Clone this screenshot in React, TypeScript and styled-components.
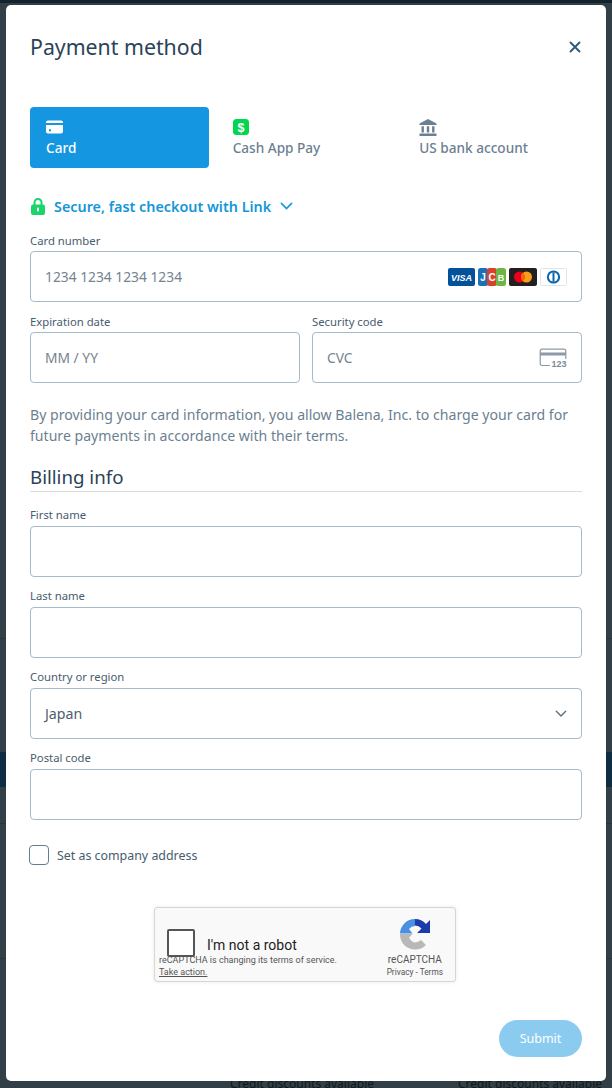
import styled, { createGlobalStyle } from 'styled-components';

const GlobalStyle = createGlobalStyle`
  html, body {
    margin: 0;
    padding: 0;
    background: #333f46;
  }
  * {
    box-sizing: border-box;
  }
`;

const font = `"Noto Sans", "Open Sans", sans-serif`;

const CardIcon = () => (
  <svg width="17" height="14" viewBox="0 0 17 14">
    <path d="M2 0.5h13a2 2 0 0 1 2 1.6V3H0v-.9A2 2 0 0 1 2 .5zM0 5h17v6.5a2 2 0 0 1-2 2H2a2 2 0 0 1-2-2z" fill="#fff" />
    <rect x="3" y="9.3" width="2" height="2" fill="#1496e0" />
  </svg>
);

const CashAppIcon = () => (
  <svg width="16" height="16" viewBox="0 0 16 16">
    <rect width="16" height="16" rx="3.5" fill="#00d64f" />
    <text x="8" y="12.6" textAnchor="middle" fontSize="12.5" fontWeight="700" fontFamily="Liberation Sans, sans-serif" fill="#fff">$</text>
  </svg>
);

const BankIcon = () => (
  <svg width="18" height="17" viewBox="0 0 18 17">
    <path d="M9 0l8.5 4.6V6H.5V4.6z" fill="#6c7f90" />
    <path d="M2.5 7.2h2.4v6.3H2.5zM7.8 7.2h2.4v6.3H7.8zM13.1 7.2h2.4v6.3h-2.4zM.5 14.6h17V17H.5z" fill="#6c7f90" />
  </svg>
);

const LockIcon = () => (
  <svg width="14" height="17" viewBox="0 0 14 17">
    <path d="M3.5 7V4.5a3.5 3.5 0 0 1 7 0V7" fill="none" stroke="#19d56b" strokeWidth="2" />
    <rect x="0" y="6.5" width="14" height="10.5" rx="2" fill="#19d56b" />
    <rect x="6" y="9.5" width="2" height="4" rx="1" fill="#fff" />
  </svg>
);

const Chevron = ({ color, size = 14, width = 2 }: { color: string; size?: number; width?: number }) => (
  <svg width={size} height={size * 0.64} viewBox="0 0 14 9">
    <path d="M1.5 1.5L7 7l5.5-5.5" fill="none" stroke={color} strokeWidth={width} strokeLinecap="round" />
  </svg>
);

const CloseIcon = () => (
  <svg width="12" height="12" viewBox="0 0 12 12">
    <path d="M1.5 1.5l9 9M10.5 1.5l-9 9" stroke="#2e5a7a" strokeWidth="1.9" strokeLinecap="round" />
  </svg>
);

const CardBrands = () => (
  <BrandRow>
    <svg width="27" height="18" viewBox="0 0 27 18">
      <rect width="27" height="18" rx="2" fill="#04519b" />
      <text x="13.5" y="12.5" textAnchor="middle" fontSize="9" fontWeight="700" fontStyle="italic" fontFamily="Liberation Sans, sans-serif" fill="#fff">VISA</text>
    </svg>
    <svg width="28" height="18" viewBox="0 0 28 18">
      <rect width="10" height="18" rx="2.5" fill="#1b70b8" />
      <rect x="9" width="10" height="18" rx="2.5" fill="#d8412a" />
      <rect x="18" width="10" height="18" rx="2.5" fill="#6cb644" />
      <text x="5" y="13" textAnchor="middle" fontSize="10" fontWeight="700" fontFamily="Liberation Sans, sans-serif" fill="#fff">J</text>
      <text x="14" y="13" textAnchor="middle" fontSize="10" fontWeight="700" fontFamily="Liberation Sans, sans-serif" fill="#fff">C</text>
      <text x="23" y="13" textAnchor="middle" fontSize="9" fontWeight="700" fontFamily="Liberation Sans, sans-serif" fill="#fff">B</text>
    </svg>
    <svg width="28" height="18" viewBox="0 0 28 18">
      <rect width="28" height="18" rx="2" fill="#231f20" />
      <circle cx="10.5" cy="9" r="5.5" fill="#eb001b" />
      <circle cx="17.5" cy="9" r="5.5" fill="#f79e1b" />
      <path d="M14 4.7a5.5 5.5 0 0 1 0 8.6a5.5 5.5 0 0 1 0-8.6z" fill="#ff5f00" />
    </svg>
    <svg width="27" height="18" viewBox="0 0 27 18">
      <rect x=".5" y=".5" width="26" height="17" rx="1" fill="#fff" stroke="#dfe5ea" />
      <circle cx="13.5" cy="9" r="6.6" fill="#0a65ac" />
      <circle cx="13.5" cy="9" r="4.6" fill="#fff" />
      <rect x="12.5" y="4.4" width="2" height="9.2" fill="#0a65ac" />
    </svg>
  </BrandRow>
);

const CvcIcon = () => (
  <svg width="28" height="20" viewBox="0 0 28 20">
    <path d="M11 17.5H3a1.8 1.8 0 0 1-1.8-1.8V3A1.8 1.8 0 0 1 3 1.2h22A1.8 1.8 0 0 1 26.8 3v8" fill="none" stroke="#8c9aa8" strokeWidth="1.2" />
    <rect x="1" y="4.5" width="26" height="3" fill="#8c9aa8" />
    <text x="27.5" y="18.5" textAnchor="end" fontSize="9" fontWeight="700" fontFamily="Liberation Sans, sans-serif" fill="#7b8a98">123</text>
  </svg>
);

const RecaptchaLogo = () => (
  <svg width="32" height="32" viewBox="0 0 32 32">
    <path d="M16 1a15 15 0 0 1 11 5l4-4v13H18l4.5-4.5A8.5 8.5 0 0 0 16 7.5z" fill="#1c3aa9" />
    <path d="M1 15.5a15 15 0 0 1 15-14.5v7a8 8 0 0 0-6 3l3.5 4.5z" fill="#4a90e2" />
    <path d="M1 16h12.5l-3.4 3.4A8.5 8.5 0 0 0 16 24.5a8.5 8.5 0 0 0 6-2.5l5 5a15 15 0 0 1-11 4.5A15 15 0 0 1 1 16z" fill="#b8b8b8" />
  </svg>
);

const Field = ({ label, placeholder, value, children }: { label: string; placeholder?: string; value?: string; children?: React.ReactNode }) => (
  <FieldWrap>
    <Label>{label}</Label>
    <InputBox>
      {placeholder && <Placeholder>{placeholder}</Placeholder>}
      {value && <Value>{value}</Value>}
      {children}
    </InputBox>
  </FieldWrap>
);

const App = () => (
  <Page>
    <GlobalStyle />
    <BehindText>
      <span>Credit discounts available</span>
      <span>Credit discounts available</span>
    </BehindText>
    <Modal>
      <Header>
        <Title>Payment method</Title>
        <CloseButton><CloseIcon /></CloseButton>
      </Header>

      <Tabs>
        <Tab $active>
          <TabIcon><CardIcon /></TabIcon>
          Card
        </Tab>
        <Tab>
          <TabIcon><CashAppIcon /></TabIcon>
          Cash App Pay
        </Tab>
        <Tab>
          <TabIcon><BankIcon /></TabIcon>
          US bank account
        </Tab>
      </Tabs>

      <LinkRow>
        <LockIcon />
        <LinkText>Secure, fast checkout with Link</LinkText>
        <Chevron color="#1496e0" size={13} width={1.8} />
      </LinkRow>

      <Fields>
        <Field label="Card number" placeholder="1234 1234 1234 1234">
          <CardBrands />
        </Field>
        <TwoCols>
          <Field label="Expiration date" placeholder="MM / YY" />
          <Field label="Security code" placeholder="CVC">
            <CvcIcon />
          </Field>
        </TwoCols>
      </Fields>

      <Notice>
        By providing your card information, you allow Balena, Inc. to charge your card for future payments in accordance with their terms.
      </Notice>

      <SectionTitle>Billing info</SectionTitle>

      <BillingFields>
        <Field label="First name" />
        <Field label="Last name" />
        <Field label="Country or region" value="Japan">
          <Chevron color="#5f7180" size={12} width={1.7} />
        </Field>
        <Field label="Postal code" />
      </BillingFields>

      <CheckRow>
        <CheckBox />
        <CheckLabel>Set as company address</CheckLabel>
      </CheckRow>

      <Captcha>
        <CaptchaBox />
        <CaptchaText>I'm not a robot</CaptchaText>
        <CaptchaBrand>
          <RecaptchaLogo />
          <BrandName>reCAPTCHA</BrandName>
          <BrandLinks>Privacy - Terms</BrandLinks>
        </CaptchaBrand>
        <CaptchaNotice>
          reCAPTCHA is changing its terms of service.
          <br />
          <u>Take action.</u>
        </CaptchaNotice>
      </Captcha>

      <Footer>
        <SubmitButton>Submit</SubmitButton>
      </Footer>
    </Modal>
  </Page>
);

const Page = styled.div`
  position: relative;
  width: 612px;
  height: 1088px;
  overflow: hidden;
  display: flex;
  flex-direction: column;
  justify-content: flex-end;
  background:
    linear-gradient(#14222e 0 3px, transparent 3px),
    linear-gradient(to bottom, transparent 752px, #0e2c42 752px, #0e2c42 787px, transparent 787px),
    linear-gradient(to bottom, transparent 638px, #2a343a 638px, #2a343a 639px, transparent 639px),
    linear-gradient(to bottom, transparent 823px, #2a343a 823px, #2a343a 824px, transparent 824px),
    linear-gradient(to bottom, transparent 958px, #2a343a 958px, #2a343a 959px, transparent 959px),
    #333f46;
`;

const BehindText = styled.div`
  display: flex;
  gap: 84px;
  padding-left: 230px;
  height: 12px;
  margin-bottom: -2px;
  font-family: ${font};
  font-size: 12px;
  line-height: 12px;
  color: #10181d;
  white-space: nowrap;
`;

const Modal = styled.div`
  position: absolute;
  top: 5px;
  left: 6px;
  width: 600px;
  height: 1076px;
  padding: 24px;
  background: #fff;
  border-radius: 5px;
  font-family: ${font};
  color: #2a4359;
`;

const Header = styled.div`
  display: flex;
  align-items: center;
  justify-content: space-between;
  height: 36px;
  margin-bottom: 42px;
`;

const Title = styled.h2`
  margin: 0;
  font-size: 21.3px;
  font-weight: 400;
  line-height: 36px;
  color: #2a4359;
`;

const CloseButton = styled.button`
  display: flex;
  padding: 0;
  margin-right: 1px;
  border: 0;
  background: none;
`;

const Tabs = styled.div`
  display: grid;
  grid-template-columns: repeat(3, 1fr);
  gap: 8px;
`;

const Tab = styled.div<{ $active?: boolean }>`
  height: 61px;
  padding: 12px 16px 0;
  border-radius: 4px;
  font-size: 13.6px;
  font-weight: 500;
  line-height: 20px;
  background: ${(p) => (p.$active ? '#1496e0' : 'transparent')};
  color: ${(p) => (p.$active ? '#fff' : '#6c7f90')};
`;

const TabIcon = styled.div`
  display: flex;
  align-items: center;
  height: 16px;
  margin-bottom: 3px;
`;

const LinkRow = styled.div`
  display: flex;
  align-items: center;
  gap: 9px;
  height: 20px;
  margin-top: 28px;
  margin-bottom: 18px;
  padding-left: 1px;
`;

const LinkText = styled.span`
  margin-right: 0;
  font-size: 14.35px;
  font-weight: 600;
  color: #1496d8;
`;

const Fields = styled.div`
  display: flex;
  flex-direction: column;
  gap: 13px;
`;

const TwoCols = styled.div`
  display: grid;
  grid-template-columns: repeat(2, 1fr);
  gap: 12px;
`;

const FieldWrap = styled.div`
  display: flex;
  flex-direction: column;
`;

const Label = styled.div`
  height: 17px;
  font-size: 11.3px;
  line-height: 14px;
  color: #475c6d;
`;

const BillingFields = styled(Fields)`
  gap: 12px;

  ${Label} {
    height: 18px;
  }
`;

const InputBox = styled.div`
  display: flex;
  align-items: center;
  justify-content: space-between;
  height: 51px;
  padding: 0 14px;
  border: 1px solid #a3bbca;
  border-radius: 4px;
  font-size: 14px;
`;

const Placeholder = styled.span`
  font-size: 13.8px;
  color: #75838f;
`;

const Value = styled.span`
  font-size: 14.2px;
  color: #4b5e6e;
`;

const BrandRow = styled.div`
  display: flex;
  gap: 3px;
`;

const Notice = styled.p`
  margin: 21px 0 0;
  font-size: 14.1px;
  line-height: 21px;
  color: #6c7f90;
`;

const SectionTitle = styled.h3`
  margin: 18px 0 16px;
  height: 28px;
  border-bottom: 1px solid #d8dde1;
  font-size: 18.7px;
  font-weight: 400;
  line-height: 25px;
  color: #2a4359;
`;

const CheckRow = styled.div`
  display: flex;
  align-items: center;
  gap: 8px;
  height: 20px;
  margin: 25px 0 0 -1px;
`;

const CheckBox = styled.div`
  width: 20px;
  height: 20px;
  border: 1px solid #5d7f97;
  border-radius: 4px;
`;

const CheckLabel = styled.span`
  font-size: 12.4px;
  color: #475c6d;
`;

const Captcha = styled.div`
  position: relative;
  display: flex;
  align-items: center;
  width: 302px;
  height: 75px;
  margin: 42px 0 0 124px;
  padding: 0 12px 0 12px;
  background: #f9f9f9;
  border: 1px solid #d6d6d6;
  border-radius: 3px;
  box-shadow: 0 0 4px rgba(0, 0, 0, 0.08);
  font-family: Roboto, "Liberation Sans", sans-serif;
`;

const CaptchaBox = styled.div`
  width: 28px;
  height: 28px;
  margin-bottom: 4px;
  background: #fff;
  border: 2px solid #555;
  border-radius: 2px;
`;

const CaptchaText = styled.div`
  margin-left: 12px;
  font-size: 14px;
  color: #222;
`;

const CaptchaBrand = styled.div`
  display: flex;
  flex-direction: column;
  align-items: center;
  margin-left: auto;
  padding-top: 6px;
`;

const BrandName = styled.div`
  margin-top: 4px;
  font-size: 10px;
  line-height: 12px;
  color: #555;
`;

const BrandLinks = styled.div`
  margin-top: 1px;
  font-size: 8.3px;
  line-height: 10px;
  color: #555;
`;

const CaptchaNotice = styled.div`
  position: absolute;
  left: 4px;
  bottom: 3px;
  font-size: 9px;
  line-height: 12px;
  color: #555;
  white-space: nowrap;
`;

const Footer = styled.div`
  display: flex;
  justify-content: flex-end;
  margin-top: 38px;
`;

const SubmitButton = styled.button`
  width: 83px;
  height: 37px;
  border: 0;
  border-radius: 19px;
  background: #8bcbf0;
  color: #fff;
  font-family: ${font};
  font-size: 12.5px;
`;

export default App;
